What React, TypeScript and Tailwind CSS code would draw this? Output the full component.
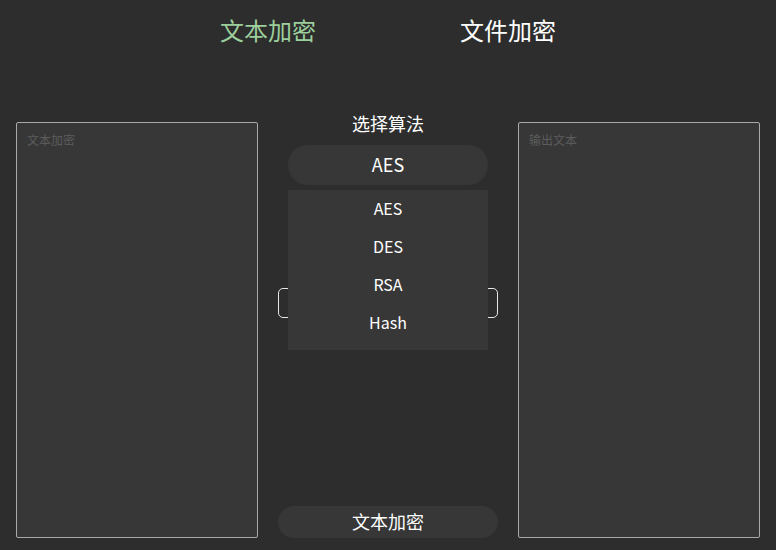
import React, { useState } from 'react';

const font = { fontFamily: '"Noto Sans CJK SC", "Noto Sans", sans-serif' };

const App: React.FC = () => {
  const [algo] = useState('AES');
  const options = ['AES', 'DES', 'RSA', 'Hash'];

  return (
    <div className="w-[776px] h-[550px] bg-[#2d2d2d] text-white overflow-hidden" style={font}>
      {/* tabs */}
      <div className="flex justify-center gap-[144px] pt-[14px] pb-px">
        <span className="text-[24px] leading-[32px] text-[#9ccf9c]">文本加密</span>
        <span className="text-[24px] leading-[32px] text-white">文件加密</span>
      </div>

      <div className="flex gap-5 px-4 mt-[65px]">
        <textarea
          className="w-[242px] h-[416px] mt-[10px] bg-[#373737] border border-[#aaaaaa] rounded-[2px] px-[10px] py-[9px] text-[12px] leading-[16px] text-white placeholder:text-[#5c5c5c] resize-none outline-none"
          placeholder="文本加密"
        />

        <div className="relative w-[220px] h-[426px] flex flex-col items-center">
          <div className="text-[18px] leading-[22px]">选择算法</div>
          <div className="mt-[11px] w-[200px] h-10 rounded-full bg-[#373737] flex items-center justify-center text-[18px] pb-[2px]">
            {algo}
          </div>

          <div className="mt-[103px] w-[220px] h-[30px] rounded-[5px] border border-[#e6e6e6]" />

          <div className="mt-auto w-[220px] h-8 rounded-full bg-[#373737] flex items-center justify-center text-[18px] pb-[2px]">
            文本加密
          </div>

          {/* open dropdown list */}
          <div className="absolute left-[10px] top-[78px] w-[200px] bg-[#373737] pb-2">
            {options.map((o) => (
              <div key={o} className="h-[38px] flex items-center justify-center text-[16px] pb-[2px]">
                {o}
              </div>
            ))}
          </div>
        </div>

        <textarea
          className="w-[242px] h-[416px] mt-[10px] bg-[#373737] border border-[#aaaaaa] rounded-[2px] px-[10px] py-[9px] text-[12px] leading-[16px] text-white placeholder:text-[#5c5c5c] resize-none outline-none"
          placeholder="输出文本"
        />
      </div>
    </div>
  );
};

export default App;
